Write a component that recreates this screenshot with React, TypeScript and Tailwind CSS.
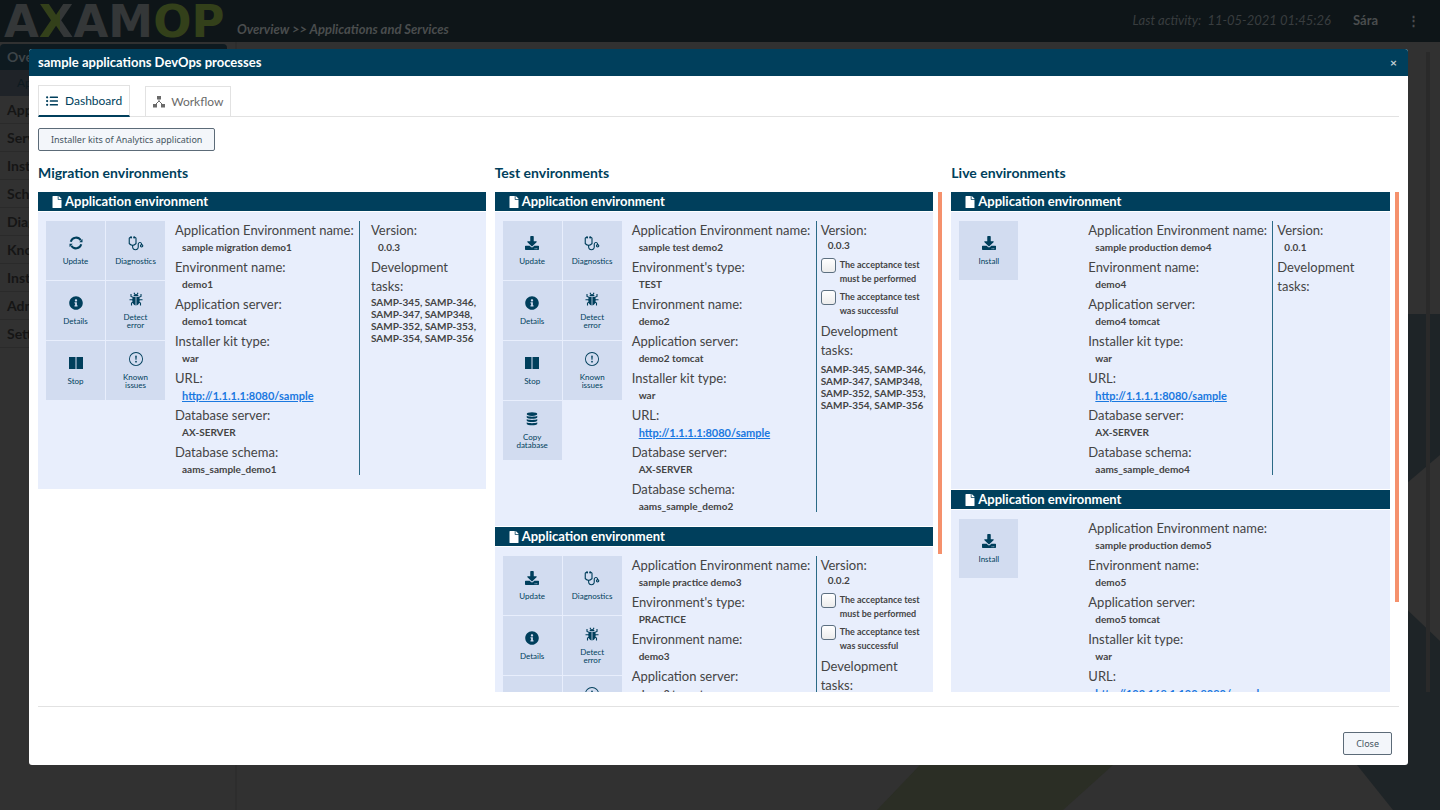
import type { ReactNode } from "react";
import { FaDownload, FaFile, FaInfoCircle, FaListUl } from "react-icons/fa";
import { LiaStethoscopeSolid } from "react-icons/lia";
import { BsExclamationCircle } from "react-icons/bs";

const icon = "size-[14px] shrink-0";

function SyncIcon() {
  return (
    <svg viewBox="0 0 28 28" className={icon} fill="currentColor" aria-hidden="true">
      <path d="M3.500 11.500A11 11 0 0 1 23.500 8.500" fill="none" stroke="currentColor" strokeWidth="4" />
      <path d="M24.500 16.500A11 11 0 0 1 4.500 19.500" fill="none" stroke="currentColor" strokeWidth="4" />
      <path d="M27 6v6.500h-6.500z" />
      <path d="M1 22v-6.500h6.500z" />
    </svg>
  );
}

function BugIcon() {
  return (
    <svg viewBox="0 0 28 28" className={icon} fill="currentColor" aria-hidden="true">
      <path
        d="M10 1.500l1.500 3M18 1.500l-1.500 3M9 11 4 9V4M19 11l5-2V4M8 15.500H1M20 15.500h7M9 20l-4 2v5M19 20l4 2v5"
        fill="none"
        stroke="currentColor"
        strokeWidth="2.200"
      />
      <path d="M9 8.500c0-6 10-6 10 0z" />
      <path d="M7.500 10h5.700v17c-7-1.500-7.500-11-5.700-17zM20.500 10h-5.700v17c7-1.500 7.500-11 5.700-17z" />
    </svg>
  );
}

function BooksIcon() {
  return (
    <svg viewBox="0 0 14 14" className={icon} fill="currentColor" aria-hidden="true">
      <rect x="0" y="1" width="6.500" height="12" />
      <rect x="7.500" y="1" width="6.500" height="12" />
    </svg>
  );
}

function DatabaseIcon() {
  return (
    <svg viewBox="0 0 28 28" className={icon} fill="currentColor" aria-hidden="true">
      <ellipse cx="14" cy="4.200" rx="10.500" ry="3.600" />
      <path d="M3.500 7.500c2.500 2.400 18.500 2.400 21 0v3.500c-1 3.600-20 3.600-21 0z" />
      <path d="M3.500 14c2.500 2.400 18.500 2.400 21 0v3.500c-1 3.600-20 3.600-21 0z" />
      <path d="M3.500 20.500c2.500 2.400 18.500 2.400 21 0v3.500c-1 3.600-20 3.600-21 0z" />
    </svg>
  );
}

function WorkflowIcon() {
  return (
    <svg viewBox="0 0 24 24" className="size-3 shrink-0" fill="currentColor" aria-hidden="true">
      <rect x="8" y="0" width="8" height="7" />
      <rect x="0" y="16" width="8" height="7" />
      <rect x="16" y="16" width="8" height="7" />
      <path d="M12 7v4M12 10 5 17M12 10l7 7" stroke="currentColor" strokeWidth="2" />
    </svg>
  );
}

type Action = { label: string; icon: ReactNode };

const update: Action = { label: "Update", icon: <FaDownload className={icon} /> };
const sync: Action = { label: "Update", icon: <SyncIcon /> };
const install: Action = { label: "Install", icon: <FaDownload className={icon} /> };
const copy: Action = { label: "Copy database", icon: <DatabaseIcon /> };
const common: Action[] = [
  { label: "Diagnostics", icon: <LiaStethoscopeSolid className="-m-[2px] size-[18px] shrink-0" /> },
  { label: "Details", icon: <FaInfoCircle className={icon} /> },
  { label: "Detect error", icon: <BugIcon /> },
  { label: "Stop", icon: <BooksIcon /> },
  { label: "Known issues", icon: <BsExclamationCircle className={icon} /> },
];

type Env = {
  id: string;
  actions: Action[];
  fields: [string, string][];
  version?: string;
  acceptance?: boolean;
  tasks?: string;
  wide?: boolean;
};

const tasks = "SAMP-345, SAMP-346, SAMP-347, SAMP348, SAMP-352, SAMP-353, SAMP-354, SAMP-356";

function fieldsOf(name: string, demo: string, type?: string, url = "http://1.1.1.1:8080/sample"): [string, string][] {
  return [
    ["Application Environment name:", name],
    ...(type ? ([["Environment's type:", type]] as [string, string][]) : []),
    ["Environment name:", demo],
    ["Application server:", `${demo} tomcat`],
    ["Installer kit type:", "war"],
    ["URL:", url],
    ["Database server:", "AX-SERVER"],
    ["Database schema:", `aams_sample_${demo}`],
  ];
}

type Column = { title: string; envs: Env[]; thumb?: string };

const columns: Column[] = [
  {
    title: "Migration environments",
    envs: [
      {
        id: "demo1",
        actions: [sync, ...common],
        fields: fieldsOf("sample migration demo1", "demo1"),
        version: "0.0.3",
        tasks,
        wide: true,
      },
    ],
  },
  {
    title: "Test environments",
    thumb: "h-[72.4%]",
    envs: [
      {
        id: "demo2",
        actions: [update, ...common, copy],
        fields: fieldsOf("sample test demo2", "demo2", "TEST"),
        version: "0.0.3",
        acceptance: true,
        tasks,
      },
      {
        id: "demo3",
        actions: [update, ...common, copy],
        fields: fieldsOf("sample practice demo3", "demo3", "PRACTICE"),
        version: "0.0.2",
        acceptance: true,
        tasks,
      },
    ],
  },
  {
    title: "Live environments",
    thumb: "h-[82%]",
    envs: [
      { id: "demo4", actions: [install], fields: fieldsOf("sample production demo4", "demo4"), version: "0.0.1" },
      {
        id: "demo5",
        actions: [install],
        fields: fieldsOf("sample production demo5", "demo5", undefined, "http://192.168.1.190:8080/sample"),
      },
    ],
  },
];

function Check({ children }: { children: ReactNode }) {
  return (
    <label className="flex items-start gap-1 pb-1 text-[9px] leading-[14px] font-bold">
      <input
        type="checkbox"
        className="size-[15px] shrink-0 appearance-none rounded-[3px] border border-[#5c6f80] bg-gradient-to-b from-white to-[#ececec] checked:bg-[#003f5c]"
      />
      <span className="w-[88px]">{children}</span>
    </label>
  );
}

function EnvCard({ env }: { env: Env }) {
  return (
    <article className="bg-[#e8eefc]">
      <h3 className="flex h-5 items-center gap-[2px] border-b border-white bg-[#003f5c] pl-[13px] text-[13px] leading-none font-bold text-white">
        <FaFile className="size-3" />
        Application environment
      </h3>
      <div className="flex px-2 py-[9px]">
        <div className="grid w-[119px] shrink-0 grid-cols-2 content-start gap-px">
          {env.actions.map((a) => (
            <button
              key={a.label}
              type="button"
              className="flex h-[59px] flex-col items-center justify-center gap-[7px] bg-[#d2dcf0] px-2 text-[8px] leading-2 text-[#003f5c]"
            >
              {a.icon}
              {a.label}
            </button>
          ))}
        </div>
        <dl className="ml-[10px] w-[184px] shrink-0 whitespace-nowrap">
          {env.fields.map(([label, value]) => (
            <div key={label}>
              <dt className="text-[13px] leading-[19px]">{label}</dt>
              <dd className="h-[18px] pl-[7px] text-[10px] leading-[15px] font-bold">
                {label === "URL:" ? (
                  <a href={value} className="text-[11px] text-[#1a78e0] underline">
                    {value}
                  </a>
                ) : (
                  value
                )}
              </dd>
            </div>
          ))}
        </dl>
        {env.version && (
          <div className={`mb-[5px] min-w-0 flex-1 border-l border-[#2b6a86] ${env.wide ? "pl-[11px]" : "pl-1"}`}>
            <p className="text-[13px] leading-[19px]">Version:</p>
            <p className={`pl-[7px] text-[10px] font-bold ${env.acceptance ? "leading-[10px]" : "h-[18px] leading-[15px]"}`}>
              {env.version}
            </p>
            {env.acceptance && (
              <div className="pt-2">
                <Check>The acceptance test must be performed</Check>
                <Check>The acceptance test was successful</Check>
              </div>
            )}
            <p className="w-[90px] text-[13px] leading-[19px]">Development tasks:</p>
            {env.tasks && (
              <p className={`w-[108px] text-[10px] leading-3 font-bold ${env.acceptance ? "pt-[3px]" : ""}`}>
                {env.tasks}
              </p>
            )}
          </div>
        )}
      </div>
    </article>
  );
}

const menu = [
  "Applications",
  "Servers",
  "Installer kits",
  "Schedules",
  "Diagnostics",
  "Known issues",
  "Instances",
  "Administration",
  "Settings",
];

function Backdrop() {
  return (
    <div className="absolute inset-0 flex flex-col overflow-hidden bg-[#313131]">
      <svg
        className="absolute inset-0 h-full w-full"
        viewBox="0 0 1440 810"
        preserveAspectRatio="none"
        aria-hidden="true"
      >
        <path d="M920 765h193l-50 45H877z" fill="#2b2e25" />
        <path d="M1400 314h40v141l-40 34z" fill="#1e2427" />
        <path d="M1357 765V600h40l43 41v169h-47z" fill="#1e2427" />
        <path d="M1426 52h4v640h-4z" fill="#2a2a2a" />
      </svg>
      <header className="relative flex h-[42px] shrink-0 items-center bg-[#0e1518] text-[#4a4d4e]">
        <div
          className="flex w-[237px] shrink-0 items-center pt-[2px] pl-1 text-[45px] leading-[54px] font-bold text-[#343738]"
          style={{ fontFamily: '"DejaVu Sans", sans-serif' }}
        >
          A
          <span className="bg-[linear-gradient(90deg,#33401a_60%,#343738_60%)] bg-clip-text text-transparent">X</span>
          AM
          <span className="text-[#33401a]">OP</span>
        </div>
        <p className="pt-[18px] text-[13px] font-bold italic">Overview &gt;&gt; Applications and Services</p>
        <p className="ml-auto text-[13px] text-[#393d3f] italic">Last activity:&nbsp; 11-05-2021 01:45:26</p>
        <p className="ml-[22px] text-[13px] font-bold text-[#4a4d4e]">Sára</p>
        <button type="button" aria-label="Menu" className="mr-5 ml-[29px] text-[13px] font-bold">
          ⋮
        </button>
      </header>
      <nav className="relative w-[237px] flex-1 border-r-2 border-[#2d2d2d] pt-[2px] text-[14px] font-bold text-[#151515]">
        <a href="#overview" className="mr-2 block h-[26px] rounded-t-sm bg-[#0e1a20] pl-[7px] leading-[26px] text-[#3d4448]">
          Overview
        </a>
        <a href="#apps" className="block h-[26px] bg-[#1f2328] pl-[17px] text-[12px] leading-[26px] font-normal text-[#0e1a20]">
          Applications
        </a>
        {menu.map((m, i) => (
          <a key={m} href={`#menu-${i}`} className="block border-b border-[#2a2a2a] pl-[7px] leading-[27px]">
            {m}
          </a>
        ))}
      </nav>
    </div>
  );
}

const smallButton =
  "block h-[23px] rounded-[2px] border border-[#5c6b78] bg-[#f3f6fa] px-3 text-[9px] leading-none text-[#455561] [font-family:'Noto_Sans',sans-serif]";

export default function App() {
  return (
    <div
      className="relative flex h-screen flex-col pt-[49px] pr-8 pb-[45px] pl-[29px] text-[#444444]"
      style={{ fontFamily: 'Lato, "Open Sans", sans-serif' }}
    >
      <Backdrop />
      <section
        role="dialog"
        aria-labelledby="dialog-title"
        className="relative flex min-h-0 flex-1 flex-col overflow-hidden rounded-[3px] bg-white"
      >
        <header className="flex h-[27px] shrink-0 items-center justify-between bg-[#003f5c] pr-[11px] pl-[9px] text-white">
          <h1 id="dialog-title" className="text-[13px] leading-none font-bold">
            sample applications DevOps processes
          </h1>
          <button type="button" aria-label="Close dialog" className="text-[12px] leading-none font-bold text-[#c5d0d6]">
            ×
          </button>
        </header>
        <div className="flex min-h-0 flex-1 flex-col px-[9px] pt-[9px]">
          <div role="tablist" className="flex shrink-0 items-end gap-[15px] border-b border-[#e2e2e2]">
            <button
              role="tab"
              aria-selected="true"
              type="button"
              className="-mb-px flex h-8 items-center gap-[7px] border border-b-2 border-[#e2e2e2] border-b-[#003f5c] px-[7px] text-[12px] text-[#003f5c]"
            >
              <FaListUl className="size-3" />
              Dashboard
            </button>
            <button
              role="tab"
              aria-selected="false"
              type="button"
              className="flex h-[30px] items-center gap-[6px] border border-b-0 border-[#e2e2e2] px-[7px] text-[12px] text-[#6a6a6a]"
            >
              <WorkflowIcon />
              Workflow
            </button>
          </div>
          <div className="shrink-0 pt-[11px]">
            <button type="button" className={smallButton}>
              Installer kits of Analytics application
            </button>
          </div>
          <div className="mt-3 grid min-h-0 flex-1 grid-cols-3 grid-rows-[minmax(0,1fr)] gap-[9px]">
            {columns.map((c) => (
              <section key={c.title} className="flex min-h-0 flex-col">
                <h2 className="mb-[10px] shrink-0 text-[14px] leading-[19px] font-bold text-[#003f5c]">{c.title}</h2>
                <div className="flex min-h-0 flex-1 gap-[5px]">
                  <div className="flex min-w-0 flex-1 flex-col gap-px overflow-y-auto [scrollbar-width:none]">
                    {c.envs.map((e) => (
                      <EnvCard key={e.id} env={e} />
                    ))}
                  </div>
                  {c.thumb && <div className={`w-1 shrink-0 bg-[#f5916c] ${c.thumb}`} />}
                </div>
              </section>
            ))}
          </div>
          <footer className="mt-[14px] flex shrink-0 justify-end border-t border-[#e2e2e2] pt-[25px] pr-[7px] pb-[10px]">
            <button type="button" className={smallButton}>
              Close
            </button>
          </footer>
        </div>
      </section>
    </div>
  );
}
